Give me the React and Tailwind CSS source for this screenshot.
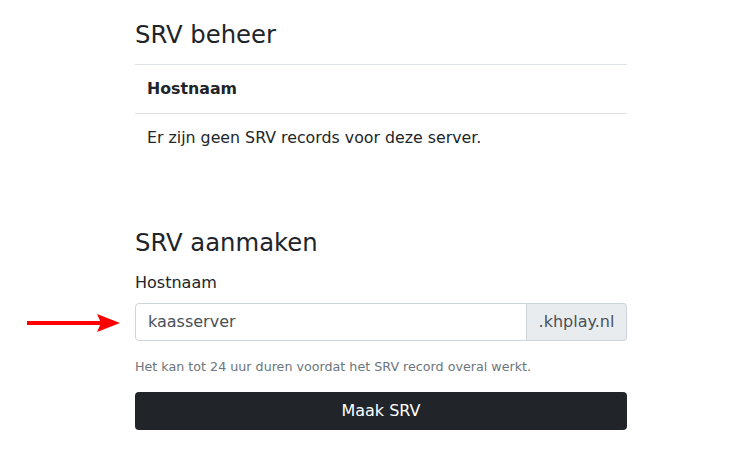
export default function App() {
  return (
    <div className="min-h-[464px] w-[748px] bg-white text-[#212529]" style={{ fontFamily: '"DejaVu Sans", sans-serif' }}>
      <div className="ml-[135px] w-[492px] pt-[20px]">
        <h3 className="text-[24.3px] leading-[29px] font-normal">SRV beheer</h3>
        <div className="mt-[15px]">
          <div className="border-t border-[#dee2e6] px-[12px] py-[12px] text-[15.8px] leading-[24px] font-bold">Hostnaam</div>
          <div className="border-t border-[#dee2e6] px-[12px] py-[12px] text-[15.8px] leading-[24px]">Er zijn geen SRV records voor deze server.</div>
        </div>
        <h3 className="mt-[66px] text-[24.3px] leading-[29px] font-normal">SRV aanmaken</h3>
        <div className="mt-[14px] text-[16px] leading-[24px]">Hostnaam</div>
        <div className="relative mt-[8px] flex h-[38px]">
          <svg className="absolute left-[-110px] top-[9px]" width="96" height="22" viewBox="0 0 96 22">
            <rect x="2" y="9" width="74" height="4" fill="#ff0000" />
            <path d="M72 2 L95 11 L72 20 L76 11 Z" fill="#ff0000" />
          </svg>
          <div className="flex flex-1 items-center rounded-l-[4px] border border-[#ced4da] px-[12px] text-[16px] text-[#495057]">kaasserver</div>
          <div className="flex w-[100px] items-center justify-center rounded-r-[4px] border border-l-0 border-[#ced4da] bg-[#e9ecef] text-[16px] text-[#495057]">.khplay.nl</div>
        </div>
        <div className="mt-[16px] text-[12.7px] leading-[20px] text-[#6c757d]">Het kan tot 24 uur duren voordat het SRV record overal werkt.</div>
        <button className="mt-[15px] flex h-[38px] w-full items-center justify-center rounded-[4px] bg-[#212529] text-[16px] text-white">Maak SRV</button>
      </div>
    </div>
  );
}
